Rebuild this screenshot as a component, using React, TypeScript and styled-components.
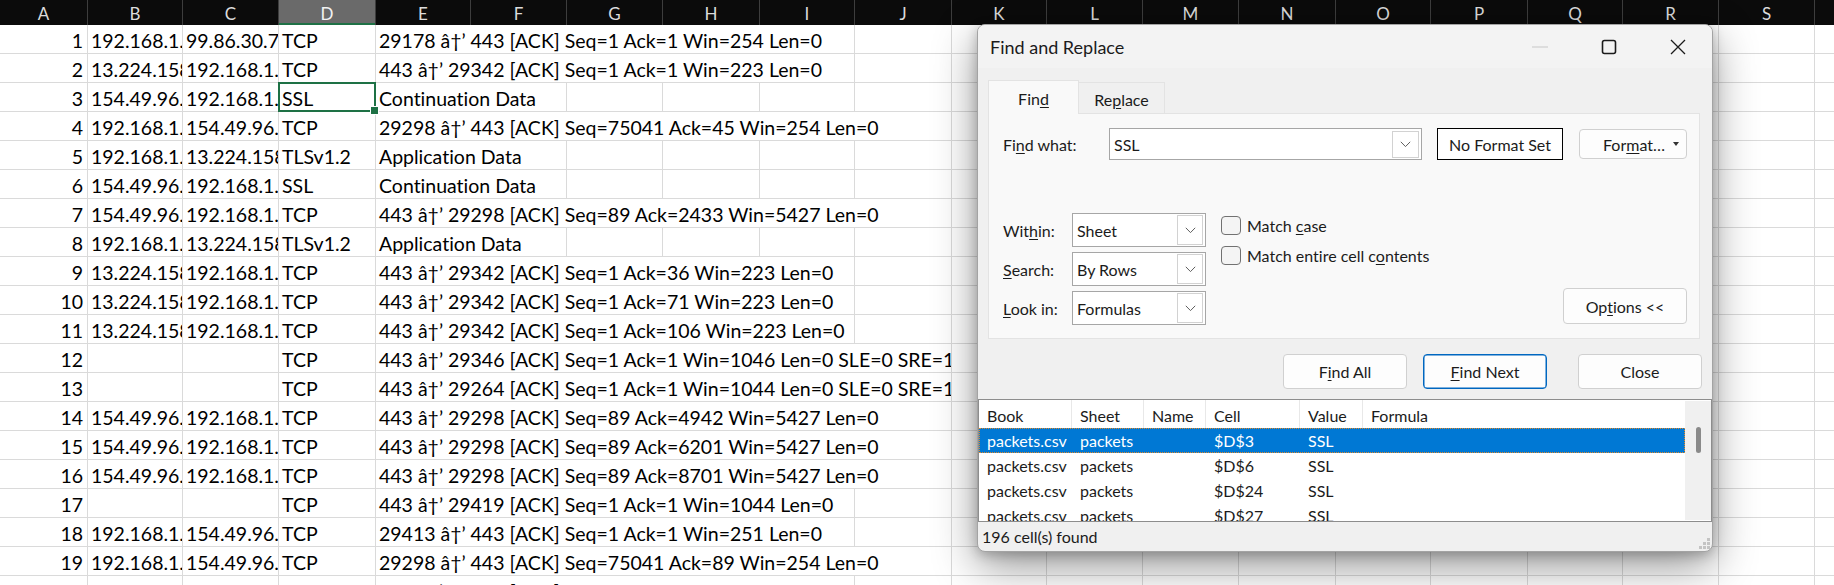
import React from "react";
import styled, { createGlobalStyle, css } from "styled-components";

const COLS = [88, 95, 96, 97, 95, 96, 96, 97, 95, 97, 95, 96, 96, 97, 95, 97, 95, 96, 96, 96];
const LETTERS = "ABCDEFGHIJKLMNOPQRST".split("");
const TEMPLATE = COLS.map((w) => `${w}px`).join(" ");
const ARROW = "\u00e2\u2020\u2019";

type RowData = { n: number; b: string; c: string; d: string; e: string; span: number };

const r = (n: number, b: string, c: string, d: string, e: string, span: number): RowData => ({ n, b, c, d, e, span });

const LOCAL = "192.168.1.105";
const CF = "13.224.158.44";
const SRV = "154.49.96.12";

const ROWS: RowData[] = [
  r(1, LOCAL, "99.86.30.73", "TCP", `29178 ${ARROW} 443 [ACK] Seq=1 Ack=1 Win=254 Len=0`, 5),
  r(2, CF, LOCAL, "TCP", `443 ${ARROW} 29342 [ACK] Seq=1 Ack=1 Win=223 Len=0`, 5),
  r(3, SRV, LOCAL, "SSL", "Continuation Data", 2),
  r(4, LOCAL, SRV, "TCP", `29298 ${ARROW} 443 [ACK] Seq=75041 Ack=45 Win=254 Len=0`, 6),
  r(5, LOCAL, CF, "TLSv1.2", "Application Data", 2),
  r(6, SRV, LOCAL, "SSL", "Continuation Data", 2),
  r(7, SRV, LOCAL, "TCP", `443 ${ARROW} 29298 [ACK] Seq=89 Ack=2433 Win=5427 Len=0`, 6),
  r(8, LOCAL, CF, "TLSv1.2", "Application Data", 2),
  r(9, CF, LOCAL, "TCP", `443 ${ARROW} 29342 [ACK] Seq=1 Ack=36 Win=223 Len=0`, 5),
  r(10, CF, LOCAL, "TCP", `443 ${ARROW} 29342 [ACK] Seq=1 Ack=71 Win=223 Len=0`, 5),
  r(11, CF, LOCAL, "TCP", `443 ${ARROW} 29342 [ACK] Seq=1 Ack=106 Win=223 Len=0`, 5),
  r(12, "", "", "TCP", `443 ${ARROW} 29346 [ACK] Seq=1 Ack=1 Win=1046 Len=0 SLE=0 SRE=1`, 6),
  r(13, "", "", "TCP", `443 ${ARROW} 29264 [ACK] Seq=1 Ack=1 Win=1044 Len=0 SLE=0 SRE=1`, 6),
  r(14, SRV, LOCAL, "TCP", `443 ${ARROW} 29298 [ACK] Seq=89 Ack=4942 Win=5427 Len=0`, 6),
  r(15, SRV, LOCAL, "TCP", `443 ${ARROW} 29298 [ACK] Seq=89 Ack=6201 Win=5427 Len=0`, 6),
  r(16, SRV, LOCAL, "TCP", `443 ${ARROW} 29298 [ACK] Seq=89 Ack=8701 Win=5427 Len=0`, 6),
  r(17, "", "", "TCP", `443 ${ARROW} 29419 [ACK] Seq=1 Ack=1 Win=1044 Len=0`, 5),
  r(18, LOCAL, SRV, "TCP", `29413 ${ARROW} 443 [ACK] Seq=1 Ack=1 Win=251 Len=0`, 5),
  r(19, LOCAL, SRV, "TCP", `29298 ${ARROW} 443 [ACK] Seq=75041 Ack=89 Win=254 Len=0`, 6),
  r(20, SRV, LOCAL, "TCP", `443 ${ARROW} 29413 [ACK] Seq=1 Ack=1 Win=1046 Len=0`, 5),
];

const RESULTS = [
  ["packets.csv", "packets", "", "$D$3", "SSL", ""],
  ["packets.csv", "packets", "", "$D$6", "SSL", ""],
  ["packets.csv", "packets", "", "$D$24", "SSL", ""],
  ["packets.csv", "packets", "", "$D$27", "SSL", ""],
];
const RESULT_COLS = ["Book", "Sheet", "Name", "Cell", "Value", "Formula"];
const RESULT_TEMPLATE = "93px 72px 62px 94px 63px 1fr";

const GlobalStyle = createGlobalStyle`
  html, body { margin: 0; padding: 0; background: #ffffff; overflow: hidden; }
  body { font-family: Lato, "Open Sans", sans-serif; font-variant-ligatures: none; }
  * { box-sizing: border-box; }
`;

const Page = styled.div`
  position: relative;
  width: 1834px;
  height: 585px;
  overflow: hidden;
  background: #ffffff;
`;

const Sheet = styled.div`
  display: flex;
  flex-direction: column;
`;

const HeaderRow = styled.div`
  display: grid;
  grid-template-columns: ${TEMPLATE};
  height: 25px;
  background: #0b0b0b;
`;

const HeaderCell = styled.div<{ $active?: boolean }>`
  display: flex;
  align-items: center;
  justify-content: center;
  border-right: 1px solid #3d3d3d;
  color: #dcdcdc;
  font-family: Lato, sans-serif;
  font-size: 17px;
  line-height: 1;
  padding-top: 1px;
  background: ${(p) => (p.$active ? "#6a6a6a" : "transparent")};
  ${(p) =>
    p.$active &&
    css`
      box-shadow: inset 0 -2px 0 #1e7145;
      color: #f2f2f2;
    `}
`;

const Row = styled.div`
  display: grid;
  grid-template-columns: ${TEMPLATE};
  height: 29px;
  flex: none;
`;

const Cell = styled.div<{ $span?: number; $right?: boolean; $selected?: boolean }>`
  grid-column: span ${(p) => p.$span ?? 1};
  display: flex;
  align-items: flex-end;
  justify-content: ${(p) => (p.$right ? "flex-end" : "flex-start")};
  padding: 0 4px 1px 3px;
  border-right: 1px solid #dadada;
  border-bottom: 1px solid #dadada;
  font-family: Lato, sans-serif;
  font-size: 19.5px;
  font-variant-ligatures: none;
  color: #000000;
  white-space: nowrap;
  overflow: hidden;
  ${(p) =>
    p.$selected &&
    css`
      position: relative;
      z-index: 2;
      overflow: visible;
      &::after {
        content: "";
        position: absolute;
        left: -1px;
        top: -1px;
        right: -1px;
        bottom: -1px;
        border: 2px solid #1e7145;
        pointer-events: none;
      }
      &::before {
        content: "";
        position: absolute;
        right: -4px;
        bottom: -4px;
        width: 7px;
        height: 7px;
        background: #1e7145;
        border: 1px solid #ffffff;
        z-index: 3;
      }
    `}
`;

const Dialog = styled.div`
  position: absolute;
  left: 977px;
  top: 24px;
  width: 736px;
  height: 528px;
  border: 1px solid #a3a3a3;
  border-radius: 8px;
  background: #f0f0f0;
  box-shadow: 0 14px 44px rgba(0, 0, 0, 0.42), 0 3px 12px rgba(0, 0, 0, 0.22);
  overflow: hidden;
  display: flex;
  flex-direction: column;
  font-family: Lato, "Open Sans", sans-serif;
  font-size: 16px;
  color: #1b1b1b;
`;

const TitleBar = styled.div`
  height: 43px;
  flex: none;
  display: flex;
  align-items: center;
  background: #f3f3f3;
`;

const Title = styled.div`
  flex: 1;
  padding-left: 12px;
  font-size: 18px;
  color: #1b1b1b;
`;

const WinButton = styled.div`
  width: 69px;
  height: 43px;
  display: flex;
  align-items: center;
  justify-content: center;
`;

const Body = styled.div`
  padding: 12px 10px 0 10px;
  display: flex;
  flex-direction: column;
  flex: none;
`;

const TabStrip = styled.div`
  display: flex;
  align-items: flex-end;
  height: 33px;
  position: relative;
  z-index: 1;
`;

const Tab = styled.div<{ $active?: boolean }>`
  display: flex;
  align-items: center;
  justify-content: center;
  border: 1px solid #e3e3e3;
  border-bottom: none;
  ${(p) =>
    p.$active
      ? css`
          width: 91px;
          height: 34px;
          margin-bottom: -1px;
          background: #f9f9f9;
          padding-top: 1px;
        `
      : css`
          width: 86px;
          height: 31px;
          background: #f0f0f0;
          border-left: none;
          padding-top: 2px;
        `}
`;

const Panel = styled.div`
  width: 712px;
  height: 226px;
  background: #f9f9f9;
  border: 1px solid #e3e3e3;
  padding: 14px 12px 0 14px;
  display: flex;
  flex-direction: column;
`;

const FindRow = styled.div`
  display: flex;
  align-items: center;
  height: 32px;
`;

const FieldLabel = styled.div<{ $w: number }>`
  width: ${(p) => p.$w}px;
  flex: none;
  white-space: nowrap;
`;

const Combo = styled.div<{ $w: number; $h: number }>`
  width: ${(p) => p.$w}px;
  height: ${(p) => p.$h}px;
  flex: none;
  display: flex;
  align-items: center;
  background: #ffffff;
  border: 1px solid #a6a6a6;
  padding: 0 2px 0 4px;
`;

const ComboText = styled.div`
  flex: 1;
  white-space: nowrap;
  color: #1b1b1b;
`;

const ComboArrow = styled.div<{ $w: number; $h: number }>`
  width: ${(p) => p.$w}px;
  height: ${(p) => p.$h}px;
  display: flex;
  align-items: center;
  justify-content: center;
  border: 1px solid #d2d2d2;
  background: #ffffff;
`;

const NoFormat = styled.div`
  margin-left: 15px;
  width: 126px;
  height: 32px;
  flex: none;
  display: flex;
  align-items: center;
  justify-content: center;
  background: #ffffff;
  border: 1px solid #000000;
`;

const Button = styled.div<{ $w: number; $h: number; $default?: boolean }>`
  width: ${(p) => p.$w}px;
  height: ${(p) => p.$h}px;
  flex: none;
  display: flex;
  align-items: center;
  justify-content: center;
  background: #fdfdfd;
  border: 1px solid ${(p) => (p.$default ? "#0067c0" : "#d0d0d0")};
  border-radius: 4px;
  ${(p) =>
    p.$default &&
    css`
      box-shadow: inset 0 0 0 0.5px #0067c0;
    `}
`;

const FormatButton = styled(Button)`
  margin-left: 16px;
  justify-content: flex-start;
  padding: 0 7px 0 23px;
`;

const FormatCaret = styled.div`
  margin-left: auto;
  width: 0;
  height: 0;
  border-left: 3.5px solid transparent;
  border-right: 3.5px solid transparent;
  border-top: 4px solid #333333;
`;

const Lower = styled.div`
  margin-top: 53px;
  display: flex;
  align-items: flex-start;
`;

const OptionGrid = styled.div`
  display: grid;
  grid-template-columns: 69px 134px;
  row-gap: 5px;
  align-items: center;
`;

const CheckColumn = styled.div`
  margin-left: 15px;
  padding-top: 3px;
  display: flex;
  flex-direction: column;
  gap: 11px;
`;

const CheckRow = styled.div`
  display: flex;
  align-items: center;
  gap: 6px;
`;

const CheckBox = styled.div`
  width: 20px;
  height: 19px;
  border: 1px solid #717171;
  border-radius: 4px;
  background: #f4f4f4;
`;

const OptionsButton = styled(Button)`
  margin-left: auto;
  align-self: flex-end;
  margin-bottom: 1px;
`;

const ButtonRow = styled.div`
  margin-top: 15px;
  display: flex;
  justify-content: flex-end;
  height: 35px;
`;

const Gap = styled.div<{ $w: number }>`
  width: ${(p) => p.$w}px;
  flex: none;
`;

const Results = styled.div`
  margin-top: 10px;
  height: 123px;
  flex: none;
  display: flex;
  background: #ffffff;
  border: 1px solid #8d8d8d;
`;

const Table = styled.div`
  flex: 1;
  display: flex;
  flex-direction: column;
  overflow: hidden;
`;

const TableHead = styled.div`
  display: grid;
  grid-template-columns: ${RESULT_TEMPLATE};
  height: 28px;
  flex: none;
`;

const HeadCell = styled.div`
  display: flex;
  align-items: center;
  padding-left: 8px;
  padding-top: 2px;
  border-right: 1px solid #e8e8e8;
  white-space: nowrap;
  &:last-child {
    border-right: none;
  }
`;

const TableRow = styled.div<{ $selected?: boolean }>`
  display: grid;
  grid-template-columns: ${RESULT_TEMPLATE};
  height: 25px;
  flex: none;
  ${(p) =>
    p.$selected &&
    css`
      background: #0078d4;
      color: #ffffff;
      outline: 1px dotted #e0892a;
      outline-offset: -1px;
    `}
`;

const TableCell = styled.div`
  display: flex;
  align-items: center;
  padding-left: 8px;
  white-space: nowrap;
`;

const ScrollTrack = styled.div`
  width: 26px;
  flex: none;
  margin: 1px 0 1px 0;
  background: #f0f0f0;
  display: flex;
  justify-content: center;
  padding-top: 26px;
`;

const ScrollThumb = styled.div`
  width: 5px;
  height: 26px;
  border-radius: 3px;
  background: #8a8a8a;
`;

const StatusBar = styled.div`
  flex: 1;
  display: flex;
  align-items: center;
  padding-left: 4px;
  position: relative;
`;

const Grip = styled.svg`
  position: absolute;
  right: 1px;
  bottom: 1px;
`;

const U = styled.span`
  text-decoration: underline;
  text-underline-offset: 2px;
`;

const Chevron = () => (
  <svg width="11" height="7" viewBox="0 0 11 7">
    <path d="M0.8 0.8 L5.5 5.6 L10.2 0.8" fill="none" stroke="#5f5f5f" strokeWidth="1" />
  </svg>
);

const ComboBox = ({ w, h, text, aw, ah }: { w: number; h: number; text: string; aw: number; ah: number }) => (
  <Combo $w={w} $h={h}>
    <ComboText>{text}</ComboText>
    <ComboArrow $w={aw} $h={ah}>
      <Chevron />
    </ComboArrow>
  </Combo>
);

export default function App() {
  return (
    <Page>
      <GlobalStyle />
      <Sheet>
        <HeaderRow>
          {LETTERS.map((l) => (
            <HeaderCell key={l} $active={l === "D"}>
              {l}
            </HeaderCell>
          ))}
        </HeaderRow>
        {ROWS.map((row) => (
          <Row key={row.n}>
            <Cell $right>{row.n}</Cell>
            <Cell>{row.b}</Cell>
            <Cell>{row.c}</Cell>
            <Cell $selected={row.n === 3}>{row.d}</Cell>
            <Cell $span={row.span}>{row.e}</Cell>
            {Array.from({ length: COLS.length - 4 - row.span }).map((_, i) => (
              <Cell key={i} />
            ))}
          </Row>
        ))}
      </Sheet>

      <Dialog>
        <TitleBar>
          <Title>Find and Replace</Title>
          <WinButton>
            <svg width="16" height="2" viewBox="0 0 16 2">
              <rect x="0" y="0.5" width="16" height="1" fill="#c8c8c8" />
            </svg>
          </WinButton>
          <WinButton>
            <svg width="16" height="16" viewBox="0 0 16 16">
              <rect x="1.5" y="1.5" width="13" height="13" rx="2" fill="none" stroke="#1b1b1b" strokeWidth="1.6" />
            </svg>
          </WinButton>
          <WinButton>
            <svg width="16" height="16" viewBox="0 0 16 16">
              <path d="M1 1 L15 15 M15 1 L1 15" stroke="#1b1b1b" strokeWidth="1.3" />
            </svg>
          </WinButton>
        </TitleBar>

        <Body>
          <TabStrip>
            <Tab $active>
              Fin<U>d</U>
            </Tab>
            <Tab>
              Re<U>p</U>lace
            </Tab>
          </TabStrip>
          <Panel>
            <FindRow>
              <FieldLabel $w={106}>
                Fi<U>n</U>d what:
              </FieldLabel>
              <ComboBox w={313} h={32} text="SSL" aw={27} ah={27} />
              <NoFormat>No Format Set</NoFormat>
              <FormatButton $w={108} $h={30}>
                <span>
                  For<U>m</U>at…
                </span>
                <FormatCaret />
              </FormatButton>
            </FindRow>
            <Lower>
              <OptionGrid>
                <FieldLabel $w={69}>
                  Wit<U>h</U>in:
                </FieldLabel>
                <ComboBox w={134} h={34} text="Sheet" aw={26} ah={30} />
                <FieldLabel $w={69}>
                  <U>S</U>earch:
                </FieldLabel>
                <ComboBox w={134} h={34} text="By Rows" aw={26} ah={30} />
                <FieldLabel $w={69}>
                  <U>L</U>ook in:
                </FieldLabel>
                <ComboBox w={134} h={34} text="Formulas" aw={26} ah={30} />
              </OptionGrid>
              <CheckColumn>
                <CheckRow>
                  <CheckBox />
                  <span>
                    Match <U>c</U>ase
                  </span>
                </CheckRow>
                <CheckRow>
                  <CheckBox />
                  <span>
                    Match entire cell c<U>o</U>ntents
                  </span>
                </CheckRow>
              </CheckColumn>
              <OptionsButton $w={124} $h={36}>
                <span>
                  Op<U>t</U>ions &lt;&lt;
                </span>
              </OptionsButton>
            </Lower>
          </Panel>
          <ButtonRow>
            <Button $w={124} $h={35}>
              <span>
                F<U>i</U>nd All
              </span>
            </Button>
            <Gap $w={16} />
            <Button $w={124} $h={35} $default>
              <span>
                <U>F</U>ind Next
              </span>
            </Button>
            <Gap $w={31} />
            <Button $w={124} $h={35}>
              Close
            </Button>
          </ButtonRow>
        </Body>

        <Results>
          <Table>
            <TableHead>
              {RESULT_COLS.map((c) => (
                <HeadCell key={c}>{c}</HeadCell>
              ))}
            </TableHead>
            {RESULTS.map((row, i) => (
              <TableRow key={i} $selected={i === 0}>
                {row.map((v, j) => (
                  <TableCell key={j}>{v}</TableCell>
                ))}
              </TableRow>
            ))}
          </Table>
          <ScrollTrack>
            <ScrollThumb />
          </ScrollTrack>
        </Results>

        <StatusBar>
          196 cell(s) found
          <Grip width="12" height="12" viewBox="0 0 12 12">
            <rect x="8" y="0" width="3" height="3" fill="#c4c4c4" />
            <rect x="4" y="4" width="3" height="3" fill="#c4c4c4" />
            <rect x="8" y="4" width="3" height="3" fill="#c4c4c4" />
            <rect x="0" y="8" width="3" height="3" fill="#c4c4c4" />
            <rect x="4" y="8" width="3" height="3" fill="#c4c4c4" />
            <rect x="8" y="8" width="3" height="3" fill="#c4c4c4" />
          </Grip>
        </StatusBar>
      </Dialog>
    </Page>
  );
}
